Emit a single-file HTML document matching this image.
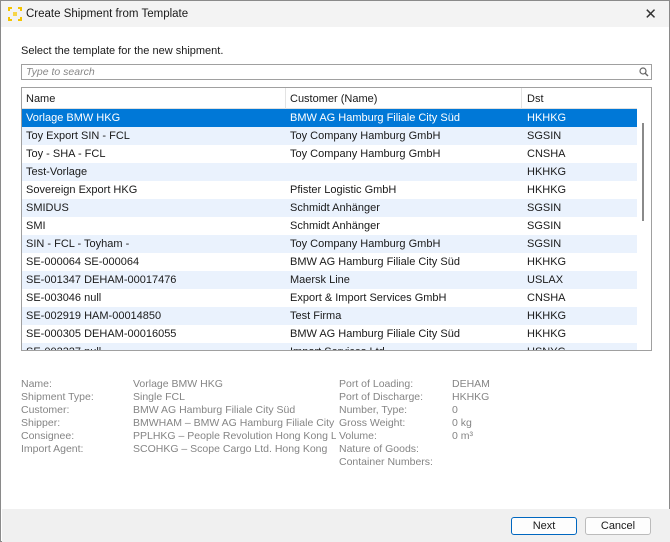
<!DOCTYPE html>
<html><head><style>
*{margin:0;padding:0;box-sizing:border-box}
body{width:670px;height:542px;overflow:hidden;background:#fff;font-family:"Liberation Sans",sans-serif;font-size:11px;color:#1a1a1a;position:relative}
.win{position:absolute;left:0;top:0;width:670px;height:542px;border:1px solid #8a8a8a;background:#fff}
.title{position:absolute;left:0;top:0;width:668px;height:26px;background:#f3f3f3}
.title span{position:absolute;left:25px;top:7px;font-size:11.5px}
.x{position:absolute;right:12px;top:4px;font-size:15px;color:#333}
.abs{position:absolute}
.search{position:absolute;left:20px;top:63px;width:631px;height:16px;border:1px solid #a0a0a0;background:#fff}
.search i{position:absolute;left:4px;top:1px;color:#888;font-size:10.5px}
.tbl{position:absolute;left:20px;top:86px;width:631px;height:264px;border:1px solid #a0a0a0;overflow:hidden}
.hdr{position:absolute;left:0;top:0;width:615px;height:21px;background:#fff;border-bottom:1px solid #e0e0e0}
.hdr div{position:absolute;top:5px}
.sep{position:absolute;top:0;width:1px;height:21px;background:#e3e3e3}
.row{position:absolute;left:0;width:615px;height:18px}
.row div{position:absolute;top:3px;white-space:nowrap}
.b{background:#eaf2fd}
.sel{background:#0078d7;color:#fff}
.sb{position:absolute;left:615px;top:0;width:15px;height:264px;background:#fff}
.det{position:absolute;color:#858585;font-size:10.5px;line-height:13px}
.foot{position:absolute;left:1px;top:508px;width:668px;height:33px;background:#f0f0f0}
.btn{position:absolute;top:516px;height:18px;border:1px solid #bbb;background:#fdfdfd;border-radius:3px;text-align:center;font-size:11px;line-height:16px}
</style></head><body>
<div class="win">
<div class="title">
<svg class="abs" style="left:7px;top:6px" width="14" height="14" viewBox="0 0 14 14"><g fill="#f4c400"><rect x="0" y="0" width="4" height="2"/><rect x="0" y="0" width="2" height="4"/><rect x="10" y="0" width="4" height="2"/><rect x="12" y="0" width="2" height="4"/><rect x="0" y="12" width="4" height="2"/><rect x="0" y="10" width="2" height="4"/><rect x="10" y="12" width="4" height="2"/><rect x="12" y="10" width="2" height="4"/><rect x="5" y="5" width="4" height="4" fill="#f6d54a"/></g></svg>
<span>Create Shipment from Template</span><div class="x">✕</div></div>
<div class="abs" style="left:20px;top:44px">Select the template for the new shipment.</div>
<div class="search"><i>Type to search</i>
<svg class="abs" style="right:2px;top:2px" width="10" height="10" viewBox="0 0 10 10"><circle cx="4" cy="4" r="3" fill="none" stroke="#666" stroke-width="1.2"/><line x1="6.2" y1="6.2" x2="9" y2="9" stroke="#666" stroke-width="1.4"/></svg></div>
<div class="tbl">
<div class="hdr"><div style="left:4px">Name</div><div style="left:268px">Customer (Name)</div><div style="left:505px">Dst</div><span class="sep" style="left:263px"></span><span class="sep" style="left:499px"></span></div>
<div class="row sel" style="top:21px"><div style="left:4px">Vorlage BMW HKG</div><div style="left:268px">BMW AG Hamburg Filiale City Süd</div><div style="left:505px">HKHKG</div></div>
<div class="row b" style="top:39px"><div style="left:4px">Toy Export SIN - FCL</div><div style="left:268px">Toy Company Hamburg GmbH</div><div style="left:505px">SGSIN</div></div>
<div class="row" style="top:57px"><div style="left:4px">Toy - SHA - FCL</div><div style="left:268px">Toy Company Hamburg GmbH</div><div style="left:505px">CNSHA</div></div>
<div class="row b" style="top:75px"><div style="left:4px">Test-Vorlage</div><div style="left:505px">HKHKG</div></div>
<div class="row" style="top:93px"><div style="left:4px">Sovereign Export HKG</div><div style="left:268px">Pfister Logistic GmbH</div><div style="left:505px">HKHKG</div></div>
<div class="row b" style="top:111px"><div style="left:4px">SMIDUS</div><div style="left:268px">Schmidt Anhänger</div><div style="left:505px">SGSIN</div></div>
<div class="row" style="top:129px"><div style="left:4px">SMI</div><div style="left:268px">Schmidt Anhänger</div><div style="left:505px">SGSIN</div></div>
<div class="row b" style="top:147px"><div style="left:4px">SIN - FCL - Toyham -</div><div style="left:268px">Toy Company Hamburg GmbH</div><div style="left:505px">SGSIN</div></div>
<div class="row" style="top:165px"><div style="left:4px">SE-000064 SE-000064</div><div style="left:268px">BMW AG Hamburg Filiale City Süd</div><div style="left:505px">HKHKG</div></div>
<div class="row b" style="top:183px"><div style="left:4px">SE-001347 DEHAM-00017476</div><div style="left:268px">Maersk Line</div><div style="left:505px">USLAX</div></div>
<div class="row" style="top:201px"><div style="left:4px">SE-003046 null</div><div style="left:268px">Export &amp; Import Services GmbH</div><div style="left:505px">CNSHA</div></div>
<div class="row b" style="top:219px"><div style="left:4px">SE-002919 HAM-00014850</div><div style="left:268px">Test Firma</div><div style="left:505px">HKHKG</div></div>
<div class="row" style="top:237px"><div style="left:4px">SE-000305 DEHAM-00016055</div><div style="left:268px">BMW AG Hamburg Filiale City Süd</div><div style="left:505px">HKHKG</div></div>
<div class="row b" style="top:255px"><div style="left:4px">SE-002327 null</div><div style="left:268px">Import Services Ltd</div><div style="left:505px">USNYC</div></div>
<div class="sb"><div class="abs" style="left:5px;top:35px;width:2px;height:98px;background:#8a8a8a"></div></div>
</div>
<div class="det" style="left:20px;top:377px">Name:<br>Shipment Type:<br>Customer:<br>Shipper:<br>Consignee:<br>Import Agent:</div>
<div class="det" style="left:132px;top:377px;width:203px;overflow:hidden;white-space:nowrap">Vorlage BMW HKG<br>Single FCL<br>BMW AG Hamburg Filiale City Süd<br>BMWHAM – BMW AG Hamburg Filiale City Süd<br>PPLHKG – People Revolution Hong Kong Ltd<br>SCOHKG – Scope Cargo Ltd. Hong Kong</div>
<div class="det" style="left:338px;top:377px">Port of Loading:<br>Port of Discharge:<br>Number, Type:<br>Gross Weight:<br>Volume:<br>Nature of Goods:<br>Container Numbers:</div>
<div class="det" style="left:451px;top:377px">DEHAM<br>HKHKG<br>0<br>0 kg<br>0 m³</div>
<div class="foot"></div>
<div class="btn" style="left:510px;width:66px;border-color:#0067c0">Next</div>
<div class="btn" style="left:584px;width:66px">Cancel</div>
</div>
</body></html>
